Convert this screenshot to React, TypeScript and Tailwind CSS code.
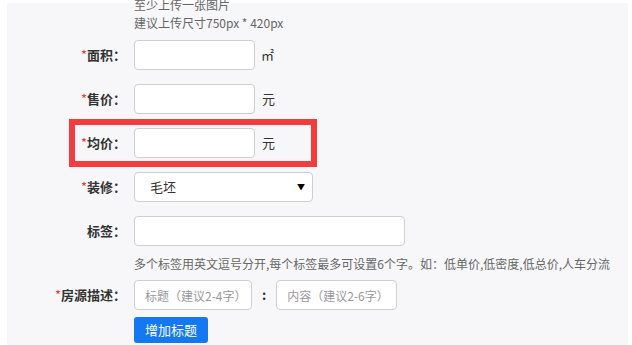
import React from "react";

const font = { fontFamily: '"Noto Sans CJK SC", "Noto Sans", sans-serif' };

function Label({ text, req = true }: { text: string; req?: boolean }) {
  return (
    <div className="w-[119px] shrink-0 text-right text-[13px] font-bold text-[#333] leading-[30px]">
      {req && <span className="text-[#e4393c] font-normal">*</span>}
      {text}：
    </div>
  );
}

function Input({ w, placeholder }: { w: string; placeholder?: string }) {
  return (
    <input
      className={`${w} h-[30px] shrink-0 rounded-[4px] border border-[#cfcfcf] bg-white pl-[10px] pr-[2px] text-[12px] text-[#333] outline-none placeholder:text-[#999]`}
      placeholder={placeholder}
      style={font}
    />
  );
}

export default function App() {
  return (
    <div className="h-[345px] w-[632px] overflow-hidden bg-white" style={font}>
      <div className="relative ml-[7px] mr-[4px] mt-[3px] h-[342px] bg-[#f7f7f9]">
        <div className="relative -top-[7px] pl-[127px] text-[12px] leading-[18px] text-[#666]">
          <div>至少上传一张图片</div>
          <div>建议上传尺寸750px * 420px</div>
        </div>
        <div className="mt-[1px] flex flex-col gap-[14px]">
          <div className="flex items-center">
            <Label text="面积" />
            <div className="ml-[8px] flex items-center">
              <Input w="w-[121px]" />
              <span className="ml-[6px] text-[13px] text-[#333]">㎡</span>
            </div>
          </div>
          <div className="flex items-center">
            <Label text="售价" />
            <div className="ml-[8px] flex items-center">
              <Input w="w-[121px]" />
              <span className="ml-[7px] text-[13px] text-[#333]">元</span>
            </div>
          </div>
          <div className="flex items-center">
            <Label text="均价" />
            <div className="ml-[8px] flex items-center">
              <Input w="w-[121px]" />
              <span className="ml-[7px] text-[13px] text-[#333]">元</span>
            </div>
          </div>
          <div className="flex items-center">
            <Label text="装修" />
            <div className="ml-[8px] flex h-[30px] w-[179px] items-center justify-between rounded-[4px] border border-[#cfcfcf] bg-white pl-[15px] pr-[7px] text-[13px] text-[#333]">
              <span>毛坯</span>
              <span className="text-[8px] text-black">▼</span>
            </div>
          </div>
          <div className="flex items-center">
            <Label text="标签" req={false} />
            <div className="ml-[8px]">
              <Input w="w-[271px]" />
            </div>
          </div>
        </div>
        <div className="mt-[10px] pl-[127px] text-[12px] leading-[16px] text-[#666]">
          多个标签用英文逗号分开,每个标签最多可设置6个字。如：低单价,低密度,低总价,人车分流
        </div>
        <div className="mt-[8px] flex items-center">
          <Label text="房源描述" />
          <div className="ml-[8px] flex items-center">
            <Input w="w-[118px]" placeholder="标题（建议2-4字）" />
            <span className="mx-[10px] text-[13px] font-bold text-[#333]">:</span>
            <Input w="w-[121px]" placeholder="内容（建议2-6字）" />
          </div>
        </div>
        <div className="mt-[6px] pl-[127px]">
          <button className="h-[26px] w-[74px] rounded-[3px] bg-[#1478f2] text-[13px] text-white" style={font}>
            增加标题
          </button>
        </div>
        <div className="pointer-events-none absolute left-[62px] top-[116px] h-[48px] w-[248px] border-[6px] border-[#f43b3d]" />
      </div>
    </div>
  );
}
